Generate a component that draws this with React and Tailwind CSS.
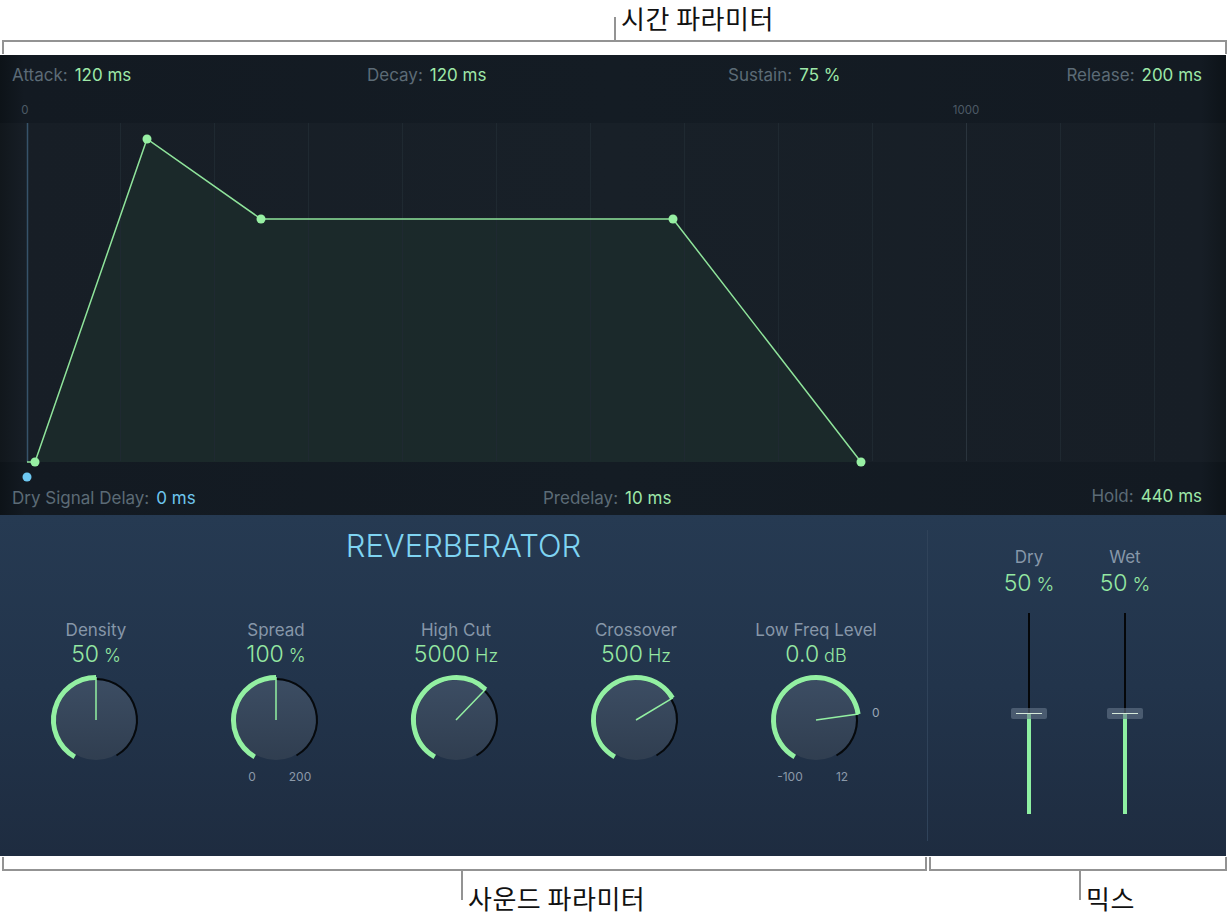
import React from "react";

const GREEN = "#8fe49b";

function Param({ name, value, valueClass }) {
  return (
    <span className="whitespace-nowrap text-[17px] leading-[20px]">
      <span className="text-[#5c6b76]">{name}:</span>
      <span className={"ml-[7px] " + valueClass}>{value}</span>
    </span>
  );
}

function Envelope() {
  const grid = [120, 214, 308, 402, 496, 590, 684, 778, 872, 966, 1060, 1154];
  const pts = [
    [35, 367],
    [147, 44],
    [261, 124],
    [673, 124],
    [861, 367],
  ];
  const poly = pts.map((p) => p.join(",")).join(" ");
  return (
    <svg width="1226" height="388" className="block overflow-visible">
      <rect x="0" y="28" width="1226" height="339" fill="#ffffff" fillOpacity="0.018" />
      <polygon points={poly} fill="#1c2a2b" fillOpacity="0.9" />
      {grid.map((x) => (
        <line
          key={x}
          x1={x + 0.5}
          x2={x + 0.5}
          y1="28"
          y2="366"
          stroke={x === 966 ? "#2a343d" : "#1f2931"}
          strokeWidth="1"
        />
      ))}
      <line x1="27.5" x2="27.5" y1="28" y2="367" stroke="#37536a" strokeWidth="1.5" />
      <line x1="27" x2="35" y1="367" y2="367" stroke={GREEN} strokeWidth="1.5" />
      <polyline points={poly} fill="none" stroke={GREEN} strokeWidth="1.5" />
      {pts.map(([x, y]) => (
        <circle key={x} cx={x} cy={y} r="4.5" fill="#97efa3" />
      ))}
      <circle cx="27" cy="382" r="4.5" fill="#6ec8f2" />
      <text x="25" y="19" textAnchor="middle" fontSize="11.5" fill="#4d5a66" className="font-['Inter','Liberation_Sans',sans-serif]">
        0
      </text>
      <text x="966" y="19" textAnchor="middle" fontSize="11.5" fill="#4d5a66" className="font-['Inter','Liberation_Sans',sans-serif]">
        1000
      </text>
    </svg>
  );
}

function Knob({ label, value, unit, angle, subLeft, subRight, subGap, side }) {
  const cx = 50;
  const cy = 50;
  const id = "kb" + label.replace(/\s/g, "");
  const pt = (r, a) => {
    const rad = (a * Math.PI) / 180;
    return [cx + r * Math.sin(rad), cy - r * Math.cos(rad)];
  };
  const arc = (r, a0, a1) => {
    const [x0, y0] = pt(r, a0);
    const [x1, y1] = pt(r, a1);
    const large = a1 - a0 > 180 ? 1 : 0;
    return `M${x0} ${y0} A${r} ${r} 0 ${large} 1 ${x1} ${y1}`;
  };
  const [px, py] = pt(43, angle);
  return (
    <div className="w-[180px] flex flex-col items-center">
      <div className="text-[17px] leading-[20px] text-[#8797a9]">{label}</div>
      <div className="leading-[28px] text-[#95e8a2] font-light">
        <span className="text-[23px]">{value}</span>
        <span className="ml-[5px] text-[18px]">{unit}</span>
      </div>
      <svg width="100" height="100" className="block overflow-visible">
        <defs>
          <linearGradient id={id} x1="0" y1="0" x2="0" y2="1">
            <stop offset="0" stopColor="#3c4d63" />
            <stop offset="1" stopColor="#303e50" />
          </linearGradient>
        </defs>
        <circle cx={cx} cy={cy} r="40" fill={"url(#" + id + ")"} />
        <path d={arc(41, angle, 150)} fill="none" stroke="#06090c" strokeWidth="2" />
        <path d={arc(42.5, -150, angle)} fill="none" stroke="#93f0a2" strokeWidth="5" />
        <line x1={cx} y1={cy} x2={px} y2={py} stroke="#93f0a2" strokeWidth="1.5" />
        {side ? (
          <text x="106" y="47" fontSize="12" fill="#9aa7b6" className="font-['Inter','Liberation_Sans',sans-serif]">
            {side}
          </text>
        ) : null}
      </svg>
      {subLeft ? (
        <div className={"flex text-[12px] leading-[14px] text-[#8b99a9] " + subGap}>
          <span className="w-[30px] text-center">{subLeft}</span>
          <span className="w-[30px] text-center">{subRight}</span>
        </div>
      ) : null}
    </div>
  );
}

function Fader({ label, value }) {
  return (
    <div className="w-[80px] flex flex-col items-center">
      <div className="text-[17px] leading-[20px] text-[#8797a9]">{label}</div>
      <div className="mt-[2px] leading-[28px] text-[#95e8a2] font-light">
        <span className="text-[23px]">{value}</span>
        <span className="ml-[5px] text-[19px]">%</span>
      </div>
      <div className="relative mt-[14px] w-[36px] h-[201px] flex flex-col items-center">
        <div className="w-[2px] h-[101px] bg-[#050709]" />
        <div className="w-[4px] flex-1 bg-[#8ef0a2]" />
        <div className="absolute left-0 top-[95px] w-[36px] h-[11px] rounded-[2px] bg-[#66768a]/60 flex items-center justify-center">
          <div className="w-[26px] h-[1.5px] bg-[#d6e9da]" />
        </div>
      </div>
    </div>
  );
}

export default function App() {
  return (
    <div className="w-[1229px] h-[923px] bg-white overflow-hidden font-['Inter','Liberation_Sans',sans-serif]">
      {/* top annotation */}
      <div className="h-[40px] flex">
        <div className="w-[614px] shrink-0" />
        <div className="w-[2px] h-[23px] self-end bg-[#939393]" />
        <div className="ml-[5px] text-[26px] leading-[36px] tracking-[0.5px] text-[#111] font-['Noto_Sans_CJK_KR',sans-serif]">
          시간 파라미터
        </div>
      </div>
      <div className="ml-[2px] w-[1225px] h-[14px] border-t-2 border-x-2 border-[#939393]" />

      {/* plug-in panel */}
      <div className="mt-[1px] w-[1226px] h-[801px] flex flex-col">
        {/* envelope */}
        <div className="h-[460px] flex flex-col bg-[linear-gradient(90deg,#0d1318_0%,#131a22_2%,#141c24_50%,#131a22_98%,#0d1318_100%)]">
          <div className="h-[40px] flex items-center pl-[12px] pr-[24px]">
            <div className="w-[355px]">
              <Param name="Attack" value="120 ms" valueClass="text-[#9ee8a8]" />
            </div>
            <div className="w-[361px]">
              <Param name="Decay" value="120 ms" valueClass="text-[#9ee8a8]" />
            </div>
            <div className="flex-1">
              <Param name="Sustain" value="75 %" valueClass="text-[#9ee8a8]" />
            </div>
            <Param name="Release" value="200 ms" valueClass="text-[#9ee8a8]" />
          </div>
          <Envelope />
          <div className="h-[32px] flex items-start pt-[3px] pl-[12px] pr-[24px]">
            <div className="w-[531px]">
              <Param name="Dry Signal Delay" value="0 ms" valueClass="text-[#6ec6ef]" />
            </div>
            <div className="flex-1">
              <Param name="Predelay" value="10 ms" valueClass="text-[#9ee8a8]" />
            </div>
            <Param name="Hold" value="440 ms" valueClass="text-[#9ee8a8]" />
          </div>
        </div>

        {/* sound + mix controls */}
        <div className="flex-1 flex bg-[linear-gradient(180deg,#263a52_0%,#22344b_50%,#1e2c40_100%)]">
          <div className="w-[927px] flex flex-col">
            <div className="pt-[13px] h-[50px] text-center text-[31px] leading-[36px] font-light text-[#7fd4f2]">
              REVERBERATOR
            </div>
            <div className="mt-[55px] pl-[6px] flex">
              <Knob label="Density" value="50" unit="%" angle={0} />
              <Knob label="Spread" value="100" unit="%" angle={0} subLeft="0" subRight="200" subGap="gap-[18px]" />
              <Knob label="High Cut" value="5000" unit="Hz" angle={44} />
              <Knob label="Crossover" value="500" unit="Hz" angle={59} />
              <Knob
                label="Low Freq Level"
                value="0.0"
                unit="dB"
                angle={82}
                side="0"
                subLeft="-100"
                subRight="12"
                subGap="gap-[22px]"
              />
            </div>
          </div>
          <div className="w-px my-[15px] bg-[#30435a]" />
          <div className="flex-1 flex justify-center gap-[16px] pt-[32px]">
            <Fader label="Dry" value="50" />
            <Fader label="Wet" value="50" />
          </div>
        </div>
      </div>

      {/* bottom annotation */}
      <div className="mt-px flex">
        <div className="ml-[2px] w-[925px] h-[14px] border-b-2 border-x-2 border-[#939393]" />
        <div className="ml-[2px] w-[298px] h-[14px] border-b-2 border-x-2 border-[#939393]" />
      </div>
      <div className="flex">
        <div className="w-[1079px] shrink-0 flex">
          <div className="w-[461px] shrink-0" />
          <div className="w-[2px] h-[29px] bg-[#939393]" />
          <div className="ml-[5px] mt-[10px] text-[26px] leading-[34px] tracking-[0.5px] text-[#111] font-['Noto_Sans_CJK_KR',sans-serif]">
            사운드 파라미터
          </div>
        </div>
        <div className="w-[2px] h-[29px] bg-[#939393]" />
        <div className="ml-[5px] mt-[10px] text-[26px] leading-[34px] tracking-[0.5px] text-[#111] font-['Noto_Sans_CJK_KR',sans-serif]">
          믹스
        </div>
      </div>
    </div>
  );
}
